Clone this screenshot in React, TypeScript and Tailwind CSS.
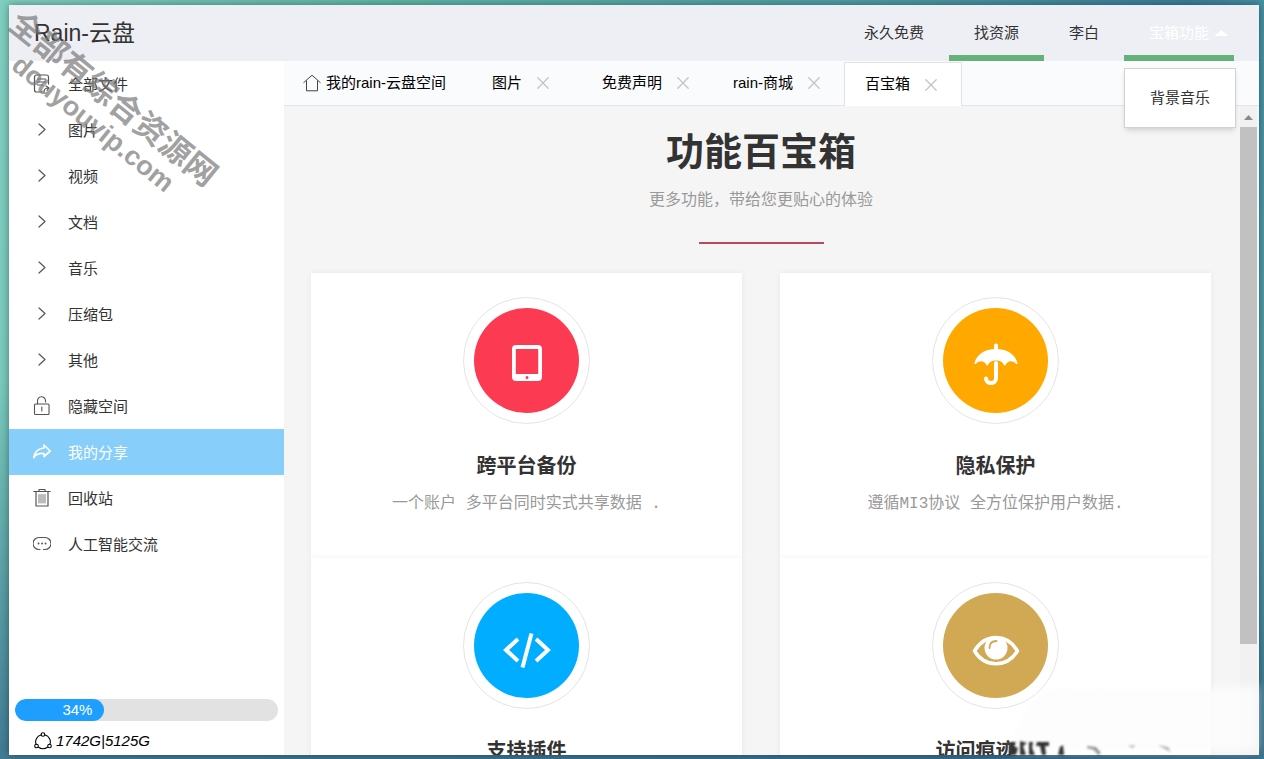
import React from "react";
import clsx from "clsx";

type IconProps = { className?: string };

const stroke = { fill: "none", stroke: "currentColor", strokeLinecap: "round", strokeLinejoin: "round" } as const;

function FilesIcon({ className }: IconProps) {
  return (
    <svg viewBox="0 0 18 20" className={className} {...stroke} strokeWidth="1.2">
      <path d="M15.5 10V3a2 2 0 0 0-2-2h-10a2 2 0 0 0-2 2v13a2 2 0 0 0 2 2H9" />
      <path d="M4.5 5h8M4.5 8h8M4.5 11h5M11 18c0-3 1-4 4-4m-2-2 3 2-2 2.500" />
    </svg>
  );
}

function ChevronIcon({ className }: IconProps) {
  return (
    <svg viewBox="0 0 18 20" className={className} {...stroke} strokeWidth="1.2">
      <path d="m6 4 6 5.500L6 15" />
    </svg>
  );
}

function LockIcon({ className }: IconProps) {
  return (
    <svg viewBox="0 0 18 20" className={className} {...stroke} strokeWidth="1.100">
      <rect x="1.500" y="8" width="14.500" height="10.500" rx="1" />
      <path d="M4.500 8V5a4 4 0 0 1 8-.5V6M8.800 11v4" />
    </svg>
  );
}

function ShareIcon({ className }: IconProps) {
  return (
    <svg viewBox="0 0 18 20" className={className} {...stroke} strokeWidth="1.700">
      <path d="M11 3 17.200 9 11 14.500v-3c-5-.5-8 .5-10.200 4C1.500 10.500 5 6.500 11 6z" />
    </svg>
  );
}

function TrashIcon({ className }: IconProps) {
  return (
    <svg viewBox="0 0 18 20" className={className} {...stroke} strokeWidth="1.200">
      <path d="M.8 3.500h16.400M6 3.500V1.500h6v2M3 3.500V18h12V3.500" />
      <path d="M6 6.500v8.500M8 6.500v8.500M10 6.500v8.500M12 6.500v8.500" strokeWidth=".8" />
    </svg>
  );
}

function ChatIcon({ className }: IconProps) {
  return (
    <svg viewBox="0 0 18 20" className={className} {...stroke} strokeWidth="1.200">
      <path d="M7 15.500H6a5.500 5.500 0 0 1 0-12h6a5.500 5.500 0 0 1 0 12h-1.500" />
      <path d="M5.500 9.500h.1M9 9.500h.1M12.500 9.500h.1" strokeWidth="1.800" />
    </svg>
  );
}

function HomeIcon({ className }: IconProps) {
  return (
    <svg viewBox="0 0 18 18" className={className} {...stroke} strokeWidth="1">
      <path d="M.8 8.500 9 1.200l8.200 7.300M3.500 7v9.800h11V7" />
    </svg>
  );
}

function CloseIcon({ className }: IconProps) {
  return (
    <svg viewBox="0 0 12 12" className={className} {...stroke} strokeWidth="1.300">
      <path d="m.8.8 10.400 10.400M11.200.8.8 11.200" />
    </svg>
  );
}

function NodesIcon({ className }: IconProps) {
  return (
    <svg viewBox="0 0 18 18" className={className} {...stroke} strokeWidth="1.100">
      <circle cx="9" cy="2.500" r="1.800" />
      <circle cx="2.500" cy="14" r="1.800" />
      <circle cx="15.500" cy="14" r="1.800" />
      <path d="M7 3a7 7 0 0 0-5 9M11 3a7 7 0 0 1 5 9M4.500 15.200a8 8 0 0 0 9 0" />
    </svg>
  );
}

function TabletIcon() {
  return (
    <svg viewBox="0 0 50 50" className="size-[50px]">
      <path
        fill="#fff"
        fillRule="evenodd"
        d="M14 9h22a4 4 0 0 1 4 4v28a4 4 0 0 1-4 4H14a4 4 0 0 1-4-4V13a4 4 0 0 1 4-4zm-.2 4v25h22.400V13zM25 40a1.500 1.500 0 1 0 0 3 1.500 1.500 0 0 0 0-3z"
      />
    </svg>
  );
}

function UmbrellaIcon() {
  return (
    <svg viewBox="0 0 50 50" className="size-[50px]">
      <path
        fill="#fff"
        d="M23 9.500a2 2 0 0 1 4 0V13c10 .4 17.500 6 19.500 14 .2 1-.8 1.400-1.500.7-4-3.700-8-3-10.500 1.300-.6.700-1 .7-1.500 0-2-3.500-4-4.500-8-4.500s-6 1-8 4.500c-.5.7-1 .7-1.500 0-2.500-4.300-6.500-5-10.500-1.300-.7.700-1.700.3-1.500-.7C5.500 19 13 13.400 23 13z"
      />
      <path d="M25 27v15.500c0 6-10 6-10 0" fill="none" stroke="#fff" strokeWidth="4" strokeLinecap="round" />
    </svg>
  );
}

function CodeIcon() {
  return (
    <svg viewBox="0 0 50 50" className="size-[50px]" fill="none" stroke="#fff" strokeWidth="4">
      <path d="M16 18 4 29l12 11M34 18l12 11-12 11" />
      <path d="m29.500 12.500-9 34" />
    </svg>
  );
}

function EyeIcon({ color }: { color: string }) {
  return (
    <svg viewBox="0 0 50 50" className="size-[50px]" fill="none">
      <path d="M3.500 30C14 12 36 12 46.500 30 36 47 14 47 3.500 30z" stroke="#fff" strokeWidth="3.500" strokeLinejoin="round" />
      <circle cx="25" cy="27" r="11.500" fill="#fff" />
      <path d="M18.500 27c0-5 3-7 7-7" stroke={color} strokeWidth="1.800" strokeLinecap="round" />
    </svg>
  );
}

const navItems = [
  { label: "永久免费", active: false },
  { label: "找资源", active: true },
  { label: "李白", active: false },
];

const menu = [
  { label: "全部文件", Icon: FilesIcon },
  { label: "图片", Icon: ChevronIcon },
  { label: "视频", Icon: ChevronIcon },
  { label: "文档", Icon: ChevronIcon },
  { label: "音乐", Icon: ChevronIcon },
  { label: "压缩包", Icon: ChevronIcon },
  { label: "其他", Icon: ChevronIcon },
  { label: "隐藏空间", Icon: LockIcon },
  { label: "我的分享", Icon: ShareIcon, active: true },
  { label: "回收站", Icon: TrashIcon },
  { label: "人工智能交流", Icon: ChatIcon },
];

const tabs = [
  { label: "图片" },
  { label: "免费声明" },
  { label: "rain-商城" },
  { label: "百宝箱", active: true },
];

const features = [
  { title: "跨平台备份", text: "一个账户 多平台同时实式共享数据 .", bg: "bg-[#fc3a52]", icon: <TabletIcon /> },
  { title: "隐私保护", text: "遵循MI3协议 全方位保护用户数据.", bg: "bg-[#ffa800]", icon: <UmbrellaIcon /> },
  { title: "支持插件", text: "", bg: "bg-[#00adff]", icon: <CodeIcon /> },
  { title: "访问痕迹", text: "", bg: "bg-[#d1a853]", icon: <EyeIcon color="#d1a853" />, titleClass: "pr-10" },
];

function Header() {
  return (
    <header className="flex h-14 shrink-0 items-stretch justify-between bg-[#eeeff4] px-[25px] text-[#333]">
      <h1 className="self-center text-[23px] leading-8">Rain-云盘</h1>
      <nav className="flex">
        {navItems.map((item) => (
          <a
            key={item.label}
            href="#"
            className={clsx(
              "flex items-center border-b-6 px-[25px] pt-1.5",
              item.active ? "border-[#64b27a]" : "border-transparent"
            )}
          >
            {item.label}
          </a>
        ))}
        <div className="relative flex">
          <button type="button" className="flex items-center gap-1 border-b-6 border-[#64b27a] pt-1.5 pr-1 pl-[25px] text-white">
            宝箱功能
            <svg viewBox="0 0 14 7" className="h-[7px] w-[17px]" fill="#fff">
              <path d="m0 6 7-6 7 6z" />
            </svg>
          </button>
          <div className="absolute top-[63px] left-0 z-20 border border-[#d2d2d2] bg-white shadow-md">
            <a href="#" className="block px-[25px] py-[19px] leading-5 whitespace-nowrap">
              背景音乐
            </a>
          </div>
        </div>
      </nav>
    </header>
  );
}

function Sidebar() {
  return (
    <aside className="flex w-[275px] shrink-0 flex-col bg-white text-[#333]">
      <nav>
        {menu.map(({ label, Icon, active }) => (
          <a
            key={label}
            href="#"
            className={clsx("flex h-[46px] items-center gap-[17px] pl-6", active && "bg-[#87cefa] text-white")}
          >
            <Icon className={clsx("h-5 w-[18px]", !active && "text-[#555]")} />
            <span className="pt-0.5">{label}</span>
          </a>
        ))}
      </nav>

      {/* Storage */}
      <div className="mt-auto px-1.5 pb-1">
        <div className="h-[22px] overflow-hidden rounded-full bg-[#e2e2e2]">
          <div className="h-full rounded-full bg-[#1e9fff] pr-3 text-right leading-[22px] font-medium text-white" style={{ width: "34%" }}>
            34%
          </div>
        </div>
        <p className="mt-2.5 flex items-center gap-1 pl-[19px] leading-5 text-black italic">
          <NodesIcon className="size-[18px]" />
          1742G|5125G
        </p>
      </div>
    </aside>
  );
}

function TabBar() {
  return (
    <div className="flex h-[45px] shrink-0 border-b border-[#e2e4e8] bg-[#fafbfd] text-black">
      <button type="button" className="flex items-center gap-[5px] pr-[26px] pl-[19px]">
        <HomeIcon className="size-[18px] text-[#444]" />
        我的rain-云盘空间
      </button>
      {tabs.map((tab) => (
        <div
          key={tab.label}
          className={clsx(
            "flex min-w-[110px] items-center gap-[15px] pr-6 pl-5",
            tab.active && "mt-px -mb-px border border-b-0 border-[#e2e2e2] bg-white"
          )}
        >
          <button type="button">{tab.label}</button>
          <button type="button" aria-label="关闭">
            <CloseIcon className="size-3 text-[#c4c4c4]" />
          </button>
        </div>
      ))}
    </div>
  );
}

function FeatureCard({ title, text, bg, icon, titleClass }: (typeof features)[number]) {
  return (
    <section className="flex h-[285px] flex-col items-center bg-white pt-6 shadow-[0_0_6px_rgba(0,0,0,0.06)]">
      <div className="rounded-full border border-[#e4e4e4] p-2.5">
        <div className={clsx("flex size-[105px] items-center justify-center rounded-full", bg)}>{icon}</div>
      </div>
      <h3 className={clsx("mt-7 text-xl leading-7 font-bold text-[#333]", titleClass)}>{title}</h3>
      <p className="mt-3 font-['Liberation_Mono','Noto_Sans_CJK_SC',monospace] text-base leading-6 text-[#999]">{text}</p>
    </section>
  );
}

function Scrollbar() {
  return (
    <div className="mr-0.5 flex w-[17px] shrink-0 flex-col items-center bg-[#f1f1f1]">
      <svg viewBox="0 0 17 21" className="h-[21px] w-[17px]" fill="#8a8a8a">
        <path d="m4 14 4.500-5L13 14z" />
      </svg>
      <div className="h-[517px] w-full bg-[#c1c1c1]" />
    </div>
  );
}

// Faded corner with leftover ink specks
function Smudge() {
  return (
    <svg viewBox="0 0 264 79" className="pointer-events-none absolute right-0 bottom-0 h-[79px] w-[264px]">
      <defs>
        <filter id="soft">
          <feGaussianBlur stdDeviation="4" />
        </filter>
        <filter id="ink">
          <feGaussianBlur stdDeviation="0.800" />
        </filter>
      </defs>
      <path d="M14 50C22 40 34 16 48 8L205 9c20-2 32-3 52-3v65H14z" fill="#fdfdfd" fillOpacity="0.900" filter="url(#soft)" />
      <g fill="#333" filter="url(#ink)">
        <path d="M10 62h6l-2 4 4 2-2 7h-7zM20 61l7 2-4 3 3 9h-6zM29 62h4l-1 6 3 7h-6zM37 62h12v4h-4l1 9h-4l-2-9h-4zM60 67l3-2 1 10h-6z" />
        <path d="m87 66 9 1 5 6-3 2-4-5-7-2z" fillOpacity="0.500" />
        <path d="m128 66 7-1-2 3zM158 65l10 2 3 5-6-3z" fillOpacity="0.350" />
      </g>
    </svg>
  );
}

function Watermark() {
  return (
    <div
      aria-hidden="true"
      className="pointer-events-none absolute top-1.5 left-6 z-30 origin-top-left rotate-[39deg] font-bold whitespace-nowrap text-[#777]/70"
    >
      <p className="text-[32px] leading-8">全部有综合资源网</p>
      <p className="pl-7 text-[27px] leading-8">douyouvip.com</p>
    </div>
  );
}

export default function App() {
  return (
    <div className="relative h-screen overflow-hidden bg-[linear-gradient(100deg,#7fcfc0_0%,#5fb5a8_30%,#4f9fa5_60%,#3b7f9a_85%,#5aaeb0_100%)] font-['Liberation_Sans','Noto_Sans_CJK_SC',sans-serif] text-[15px]">
      <div className="flex h-full flex-col bg-linear-to-b from-transparent via-transparent to-[#33688a]/80 pt-[5px] pr-[5px] pb-1 pl-[9px]">
        <div className="flex min-h-0 flex-1 flex-col shadow-[0_0_8px_rgba(0,0,0,0.4)]">
          <Header />
          <div className="flex min-h-0 flex-1">
            <Sidebar />
            <div className="flex min-w-0 flex-1 flex-col bg-[#f5f5f5]">
              <TabBar />
              <div className="flex min-h-0 flex-1">
                <main className="min-w-0 flex-1 overflow-hidden pr-[29px] pl-[27px]">
                  <div className="flex flex-col items-center pt-5">
                    <h2 className="text-[38px] leading-[52px] font-bold text-[#333]">功能百宝箱</h2>
                    <p className="mt-2.5 text-base leading-6 text-[#999]">更多功能，带给您更贴心的体验</p>
                    <div className="mt-[30px] h-0.5 w-[125px] bg-[#b94a5c]" />
                  </div>
                  <div className="mt-[29px] grid grid-cols-2 gap-x-[38px]">
                    {features.map((feature) => (
                      <FeatureCard key={feature.title} {...feature} />
                    ))}
                  </div>
                </main>
                <Scrollbar />
              </div>
            </div>
          </div>
        </div>
      </div>
      <Smudge />
      <Watermark />
    </div>
  );
}
